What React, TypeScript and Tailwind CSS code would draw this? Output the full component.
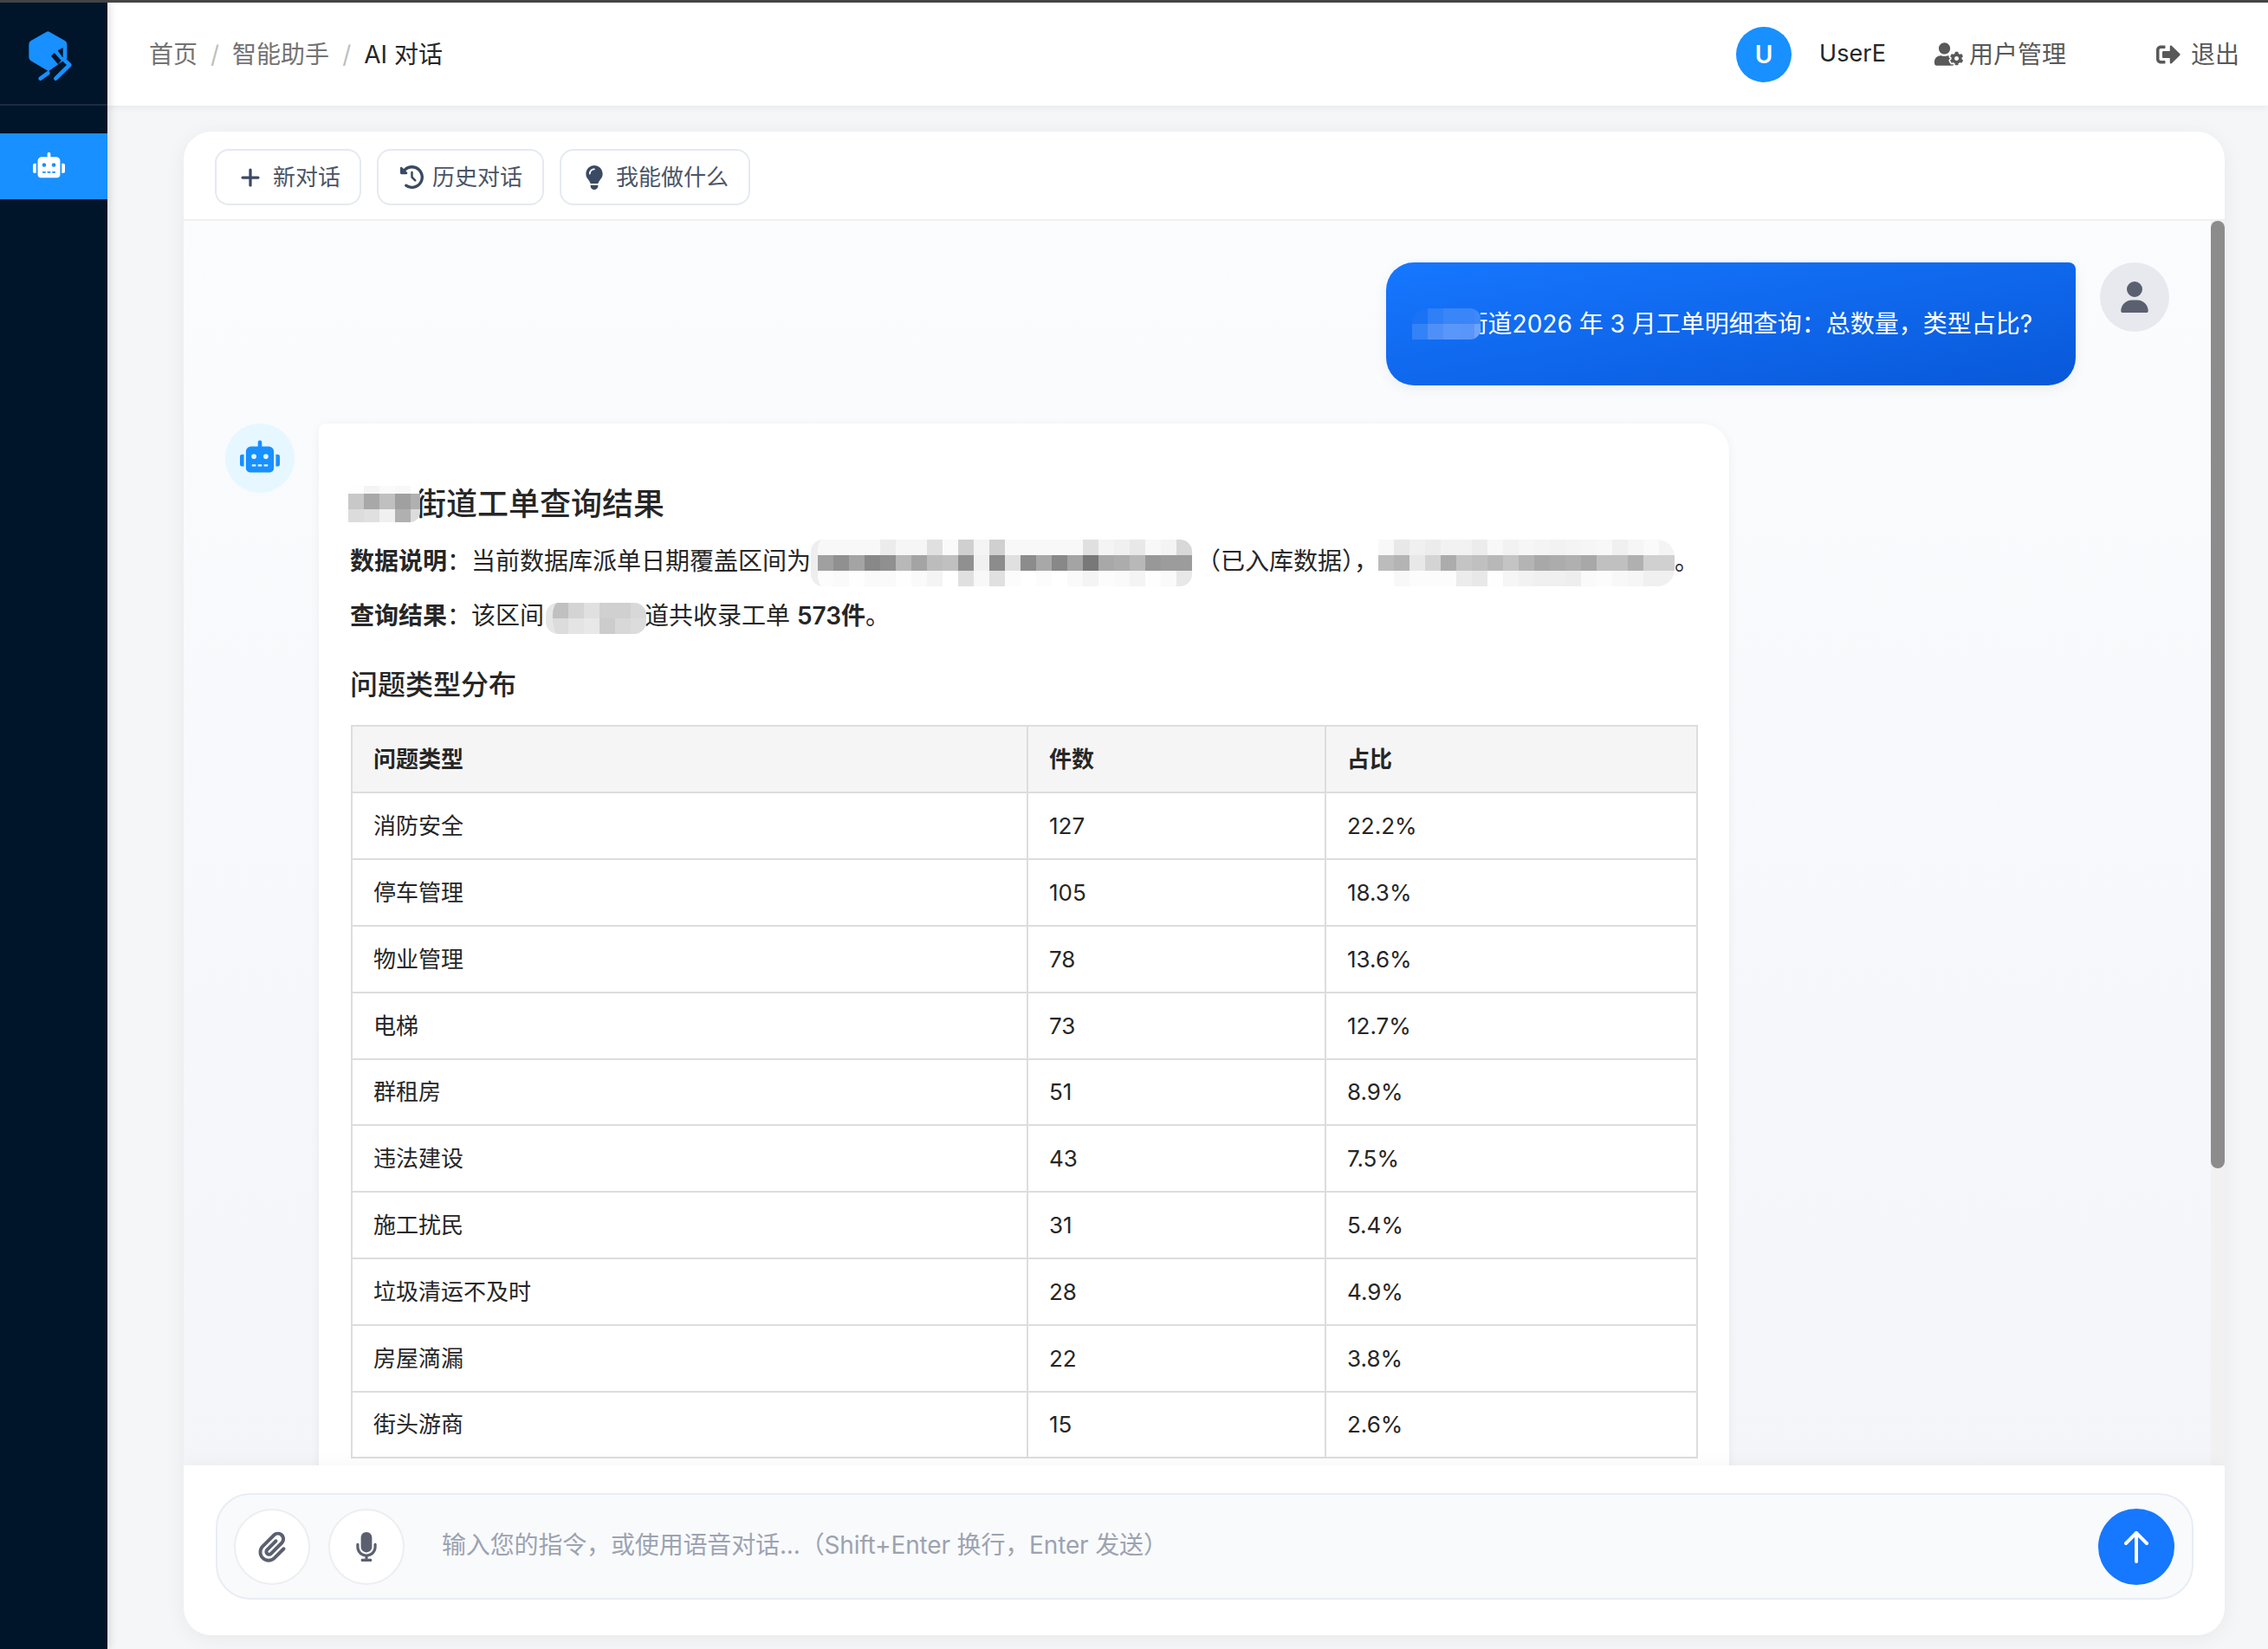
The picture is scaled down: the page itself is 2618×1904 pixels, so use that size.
import React from 'react'
import { FaClockRotateLeft, FaLightbulb, FaMicrophone, FaPaperclip, FaPlus, FaUser } from 'react-icons/fa6'
import { FaRobot, FaSignOutAlt, FaUserCog } from 'react-icons/fa'

type MosaicProps = {
    rows: string[],
    cell?: number,
    heights?: number[],
    className?: string
}

// redacted text in the screenshot, drawn as grey blocks
const Mosaic = ({ rows, cell = 18, heights, className = '' }: MosaicProps) => (
    <span className={`relative z-10 inline-flex flex-col overflow-hidden align-middle ${className}`}>
        {rows.map((row, i) => (
            <span key={i} className="flex shrink-0">
                {row.split(' ').map((c, j) => (
                    <span key={j} className="block shrink-0" style={{ width: cell, height: heights ? heights[i] : cell, backgroundColor: `#${c}` }} />
                ))}
            </span>
        ))}
    </span>
)

const gray = (s: string) => s.split(' ').map(v => (v.length === 2 ? v + v + v : v)).join(' ')

const tableRows = [
    ['消防安全', '127', '22.2%'],
    ['停车管理', '105', '18.3%'],
    ['物业管理', '78', '13.6%'],
    ['电梯', '73', '12.7%'],
    ['群租房', '51', '8.9%'],
    ['违法建设', '43', '7.5%'],
    ['施工扰民', '31', '5.4%'],
    ['垃圾清运不及时', '28', '4.9%'],
    ['房屋滴漏', '22', '3.8%'],
    ['街头游商', '15', '2.6%'],
]

const Logo = () => (
    <svg width="80" height="80" viewBox="0 0 240 240">
        <path fill="#1890ff" d="M100 36 Q106 32 112 36 L165 66 Q172 70 172 78 L172 128 L150 142 L108 172 L46 135 Q40 130 40 124 L40 78 Q40 70 47 66 Z" />
        <path fill="#001529" d="M117 119 L128 108 L152 134 L141 148 Z" />
        <path fill="#001529" d="M140 100 L158 90 L158 126 Z" />
        <path fill="none" stroke="#1890ff" strokeWidth="14" strokeLinecap="round" strokeLinejoin="round" d="M133 197 L181 150 L160 130" />
        <path fill="none" stroke="#1890ff" strokeWidth="14" strokeLinecap="round" d="M80 197 L106 178" />
    </svg>
)

const ToolButton = ({ icon, label, className }: { icon: React.ReactNode, label: string, className: string }) => (
    <button className={`flex h-[65px] items-center rounded-2xl border-2 border-[#e5e9f1] bg-white text-[26px] text-[#4a5568] ${className}`}>
        {icon}
        {label}
    </button>
)

export default function App() {
    return (
        <div className="flex h-[1904px] w-[2618px] flex-col overflow-hidden border-t-[3px] border-[#444444] bg-[#f5f6f8] text-[28px] text-[#262626] [font-family:Inter,'Noto_Sans_CJK_SC',sans-serif]">
            <div className="flex min-h-0 flex-1">
                <aside className="relative z-20 w-[124px] shrink-0 bg-[#001529] shadow-[2px_0_10px_rgba(0,0,0,0.14)]">
                    <div className="flex h-[119px] items-center border-b-2 border-[#1c2d3f] pl-5 pt-[6px]">
                        <Logo />
                    </div>
                    <div className="mt-[32px] flex h-[76px] items-center bg-[#1890ff] pl-[38px] text-white">
                        <FaRobot size={37} className="-mt-1" />
                    </div>
                </aside>

                <main className="flex min-w-0 flex-1 flex-col">
                    <header className="relative z-10 flex h-[119px] shrink-0 items-center justify-between bg-white pl-12 pr-[33px] shadow-[0_2px_8px_rgba(0,21,41,0.06)]">
                        <nav className="flex items-center text-[#737373]">
                            <span>首页</span>
                            <span className="px-[15px] text-[#bfbfbf]">/</span>
                            <span>智能助手</span>
                            <span className="px-[15px] text-[#bfbfbf]">/</span>
                            <span className="text-[#262626]">AI 对话</span>
                        </nav>
                        <div className="flex items-center text-[#595959]">
                            <div className="flex h-16 w-16 items-center justify-center rounded-full bg-[#1890ff] text-[28px] font-semibold text-white">U</div>
                            <span className="ml-8 text-[27px] text-[#262626]">UserE</span>
                            <FaUserCog size={33} className="ml-[56px]" />
                            <span className="ml-[7px]">用户管理</span>
                            <FaSignOutAlt size={28} className="ml-[104px]" />
                            <span className="ml-3">退出</span>
                        </div>
                    </header>

                    <div className="flex min-h-0 flex-1 flex-col overflow-hidden pb-4 pl-[88px] pr-[50px] pt-[30px]">
                        <div className="flex min-h-0 flex-1 flex-col overflow-hidden rounded-[32px] bg-white shadow-[0_4px_24px_rgba(0,0,0,0.06)]">
                            <div className="flex h-[103px] shrink-0 gap-[18px] border-b-2 border-[#f0f0f0] pl-9 pt-5">
                                <ToolButton className="w-[169px] gap-[13px] pl-[26px]" icon={<FaPlus size={26} className="text-[#3b4a63]" />} label="新对话" />
                                <ToolButton className="w-[193px] gap-[10px] pl-[25px]" icon={<FaClockRotateLeft size={27} className="text-[#3b4a63]" />} label="历史对话" />
                                <ToolButton className="w-[220px] gap-[11px] pl-[24px]" icon={<FaLightbulb size={28} className="text-[#3b4a63]" />} label="我能做什么" />
                            </div>

                            <div className="flex min-h-0 flex-1 bg-gradient-to-b from-[#fbfcfe] to-[#f3f5f9]">
                                <div className="min-w-0 flex-1 overflow-hidden pl-12 pr-12 pt-12">
                                    <div className="flex justify-end gap-7">
                                        <div className="flex h-[142px] w-[796px] items-center justify-end rounded-[32px] rounded-tr-lg bg-gradient-to-br from-[#1677ff] to-[#0958d9] pr-[50px] text-white shadow-[0_4px_16px_rgba(0,0,0,0.06)]">
                                            <Mosaic className="-mr-[19px] w-[79px] shrink-0 rounded-t-2xl rounded-r-xl" rows={['1a72f5 2f7ff7 3a85f8 3a85f8 3f88f8', '3482f7 4f90f8 5a97fa 5a95f9 6fa3fa']} />
                                            <span>街道2026 年 3 月工单明细查询：总数量，类型占比?</span>
                                        </div>
                                        <div className="flex h-20 w-20 shrink-0 items-center justify-center rounded-full bg-[#e8e9ef] text-[#5b6070]">
                                            <FaUser size={36} />
                                        </div>
                                    </div>

                                    <div className="mt-11 flex gap-7">
                                        <div className="flex h-20 w-20 shrink-0 items-center justify-center rounded-full bg-[#e6f7ff] text-[#1890ff]">
                                            <FaRobot size={46} className="-mt-1" />
                                        </div>
                                        <div className="h-[1400px] w-[1628px] rounded-[32px] rounded-tl-lg bg-white px-9 pt-[68px] shadow-[0_2px_12px_rgba(0,0,0,0.05)]">
                                            <h3 className="flex h-[50px] items-center text-[36px] font-medium leading-[50px]">
                                                <Mosaic className="-ml-[2px] -mr-[6px] w-[83px] shrink-0 rounded-r-xl" heights={[9, 18, 15]} rows={[gray('fe f4 fa f8 fe'), gray('c8 a8 c0 a0 b0'), gray('dc e0 f0 b0 dc')]} />
                                                <span>街道工单查询结果</span>
                                            </h3>
                                            <p className="mt-[19px] whitespace-nowrap leading-[44px]">
                                                <strong className="font-semibold">数据说明</strong>：当前数据库派单日期覆盖区间为
                                                <Mosaic
                                                    className="-my-[6px] mr-[5px] rounded-l-[14px] rounded-r-[14px] border-l-8 border-[#eeeeee]"
                                                    rows={[
                                                        gray('f8 f8 f8 f8 ec f6 f6 e0 fa d0 f4 d0 f8 f8 f8 f8 f8 e0 f4 f0 e8 f8 f4 d8'),
                                                        gray('a0 90 a4 88 90 b8 a4 bc c0 90 f0 8c e0 8c a8 88 a4 78 a8 ac b8 98 9c 9c'),
                                                        gray('fc fa fe fa fa fe fa f4 ff e0 f8 e0 fc ff fc ff fa f4 fc fa f4 fe fa e8'),
                                                    ]}
                                                />
                                                （已入库数据），
                                                <Mosaic
                                                    className="-my-[6px] rounded-r-[20px]"
                                                    rows={[
                                                        gray('f8 e8 f0 ec f2 f2 ec f8 f2 f6 f4 f2 f4 f6 f8 f0 f6 fa f4'),
                                                        gray('bc b4 e8 d4 ac c4 c0 b8 c4 b4 a8 ac b0 a8 c0 c0 b0 d0 d0'),
                                                        gray('ff f8 fc fc fc ec e8 fe f6 f2 f0 f0 ee fa fc f8 f6 f0 f0'),
                                                    ]}
                                                />
                                                。
                                            </p>
                                            <p className="mt-[18px] whitespace-nowrap leading-[44px]">
                                                <strong className="font-semibold">查询结果</strong>：该区间
                                                <Mosaic
                                                    className="-my-[2px] -mr-[2px] ml-[2px] rounded-[14px] border-l-8 border-[#e6e6e6]"
                                                    rows={[gray('c0 d4 e0 d0 d0 d8'), gray('dc e4 e8 cc d8 dc')]}
                                                />
                                                道共收录工单 <strong className="font-semibold">573件</strong>。
                                            </p>
                                            <h4 className="mt-[35px] text-[32px] font-medium leading-[46px]">问题类型分布</h4>
                                            <table className="ml-px mt-[23px] w-[1553px] table-fixed border-collapse text-[26px]">
                                                <colgroup>
                                                    <col className="w-[780px]" />
                                                    <col className="w-[344px]" />
                                                    <col className="w-[429px]" />
                                                </colgroup>
                                                <thead>
                                                    <tr className="h-[77px] bg-[#f5f5f5]">
                                                        <th className="border-2 border-[#dddddd] px-6 text-left font-semibold">问题类型</th>
                                                        <th className="border-2 border-[#dddddd] px-6 text-left font-semibold">件数</th>
                                                        <th className="border-2 border-[#dddddd] px-6 text-left font-semibold">占比</th>
                                                    </tr>
                                                </thead>
                                                <tbody>
                                                    {tableRows.map((r, i) => (
                                                        <tr key={i} className="h-[76.8px]">
                                                            {r.map((c, j) => (
                                                                <td key={j} className="border-2 border-[#dddddd] px-6">{c}</td>
                                                            ))}
                                                        </tr>
                                                    ))}
                                                </tbody>
                                            </table>
                                        </div>
                                    </div>
                                </div>

                                <div className="w-4 shrink-0 bg-[#f1f1f1]">
                                    <div className="h-[1094px] rounded-lg bg-[#8c8c8c]" />
                                </div>
                            </div>

                            <div className="relative h-[196px] shrink-0 bg-white pl-[37px] pr-9 pt-8 shadow-[0_-4px_16px_rgba(0,0,0,0.03)]">
                                <div className="flex h-[123px] items-center rounded-[40px] border-2 border-[#e8edf4] bg-[#f9fafc] pl-[19px] pr-5">
                                    <button className="flex h-[88px] w-[88px] shrink-0 items-center justify-center rounded-full border-2 border-[#eceef2] bg-white text-[#5b6070]">
                                        <FaPaperclip size={36} />
                                    </button>
                                    <button className="ml-[21px] flex h-[88px] w-[88px] shrink-0 items-center justify-center rounded-full border-2 border-[#eceef2] bg-white text-[#5b6070]">
                                        <FaMicrophone size={34} />
                                    </button>
                                    <input
                                        className="-mt-1 ml-[43px] min-w-0 flex-1 bg-transparent tracking-[-0.15px] outline-none placeholder:text-[#9ca3b1]"
                                        placeholder="输入您的指令，或使用语音对话...（Shift+Enter 换行，Enter 发送）"
                                    />
                                    <button className="flex h-[88px] w-[88px] shrink-0 items-center justify-center rounded-full bg-[#1677ff]">
                                        <svg width="30" height="38" viewBox="0 0 30 38" fill="none" stroke="#ffffff" strokeWidth="4" strokeLinecap="round" strokeLinejoin="round">
                                            <path d="M15 36 V3" />
                                            <path d="M3 15 L15 3 L27 15" />
                                        </svg>
                                    </button>
                                </div>
                            </div>
                        </div>
                    </div>
                </main>
            </div>
        </div>
    )
}
